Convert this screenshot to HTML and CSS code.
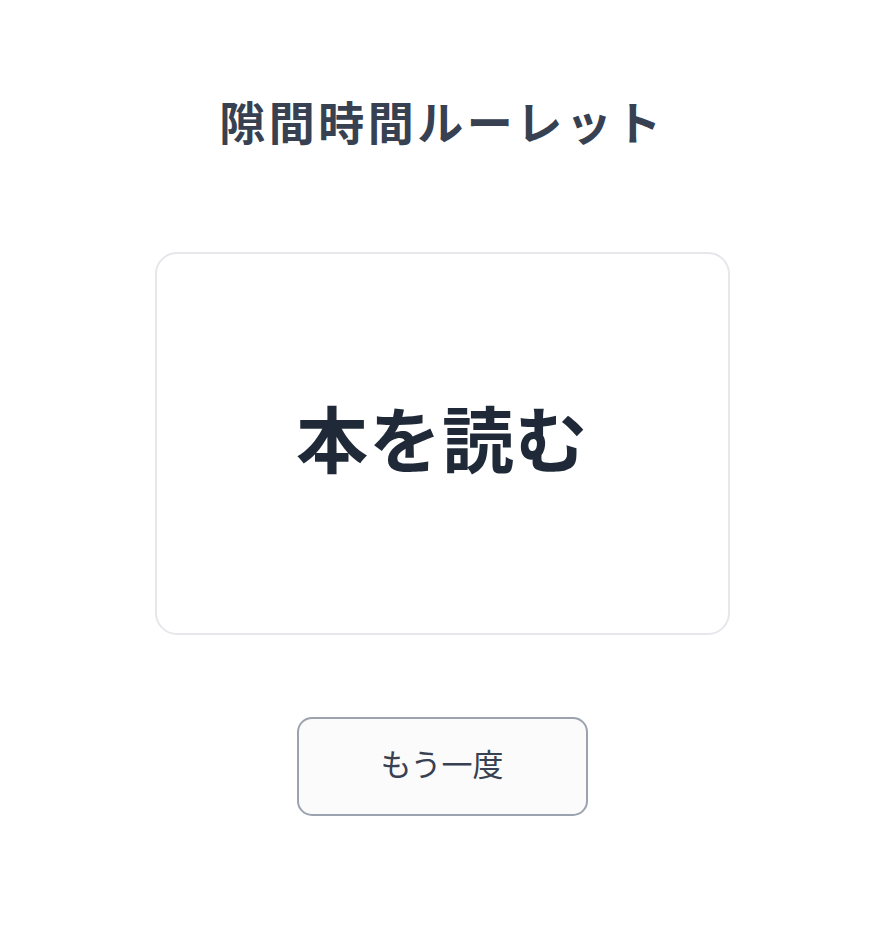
FILE: index.html
```html
<!DOCTYPE html>
<html lang="ja">
<head>
  <meta charset="UTF-8">
  <meta name="viewport" content="width=device-width, initial-scale=1.0">
  <title>隙間時間ルーレット</title>
  <link rel="stylesheet" href="styles.css">
</head>
<body>
  <div class="app">
    <h1 class="app-title">隙間時間ルーレット</h1>

    <div class="result-card">
      <p class="result-text">本を読む</p>
    </div>

    <button class="btn-retry">もう一度</button>
  </div>
</body>
</html>
```

FILE: styles.css
```css
* {
  margin: 0;
  padding: 0;
  box-sizing: border-box;
}

body {
  font-family: "Noto Sans CJK JP", "Noto Sans", sans-serif;
  background: #ffffff;
  color: #1f2937;
}

.app {
  display: flex;
  flex-direction: column;
  align-items: center;
  padding: 94px 0 0 10px;
  min-height: 100vh;
}

.app-title {
  font-size: 46px;
  font-weight: 700;
  line-height: 53px;
  letter-spacing: 3.5px;
  color: #374151;
}

.result-card {
  width: 575px;
  height: 383px;
  margin-top: 105px;
  border: 2px solid #e5e7eb;
  border-radius: 22px;
  display: flex;
  align-items: center;
  justify-content: center;
}

.result-text {
  font-size: 72px;
  font-weight: 700;
  line-height: 1;
  padding-bottom: 16px;
  letter-spacing: 1px;
  color: #1f2937;
}

.btn-retry {
  width: 291px;
  height: 99px;
  margin-top: 82px;
  padding-bottom: 8px;
  border: 2px solid #9ca3af;
  border-radius: 15px;
  background: #fbfbfc;
  font-family: inherit;
  font-size: 31px;
  color: #374151;
  cursor: pointer;
}
```
